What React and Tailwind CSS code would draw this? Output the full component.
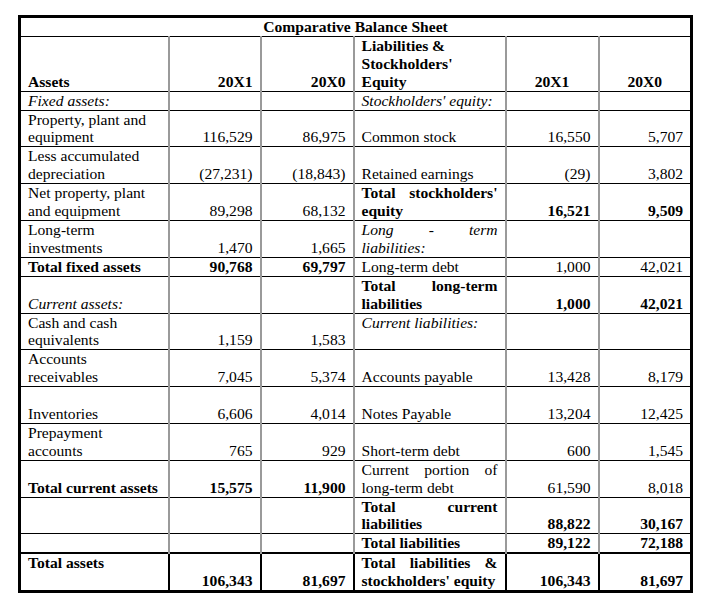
import React from 'react';

// one table cell; `last` switches the vertical rules to black for the totals row
const Td = ({ children, className = '', last = false, ...rest }) => (
  <td
    {...rest}
    className={`border-solid border-x-2 border-b border-b-black px-[7px] py-0 align-bottom ${
      last ? 'border-t-2 border-t-black border-x-black' : 'border-t border-t-black border-x-[#9a9a9a]'
    } ${className}`}
  >
    {children}
  </td>
);

const rows = [
  {
    left: <i>Fixed assets:</i>,
    right: <i>Stockholders&apos; equity:</i>,
  },
  {
    left: <>Property, plant and<br />equipment</>,
    a: '116,529', b: '86,975',
    right: 'Common stock', c: '16,550', d: '5,707',
  },
  {
    left: <>Less accumulated<br />depreciation</>,
    a: '(27,231)', b: '(18,843)',
    right: 'Retained earnings', c: '(29)', d: '3,802',
  },
  {
    left: <>Net property, plant<br />and equipment</>,
    a: '89,298', b: '68,132',
    right: <b>Total stockholders&apos; equity</b>, c: '16,521', d: '9,509', boldR: true,
  },
  {
    left: <>Long-term<br />investments</>,
    a: '1,470', b: '1,665',
    right: <i>Long - term liabilities:</i>,
  },
  {
    left: <b>Total fixed assets</b>,
    a: '90,768', b: '69,797', boldL: true,
    right: 'Long-term debt', c: '1,000', d: '42,021',
  },
  {
    left: <i>Current assets:</i>,
    right: <b>Total long-term liabilities</b>, c: '1,000', d: '42,021', boldR: true,
  },
  {
    left: <>Cash and cash<br />equivalents</>,
    a: '1,159', b: '1,583',
    right: <><i>Current liabilities:</i><br />&nbsp;</>,
  },
  {
    left: <>Accounts<br />receivables</>,
    a: '7,045', b: '5,374',
    right: 'Accounts payable', c: '13,428', d: '8,179',
  },
  {
    left: <>&nbsp;<br />Inventories</>,
    a: '6,606', b: '4,014',
    right: 'Notes Payable', c: '13,204', d: '12,425',
  },
  {
    left: <>Prepayment<br />accounts</>,
    a: '765', b: '929',
    right: 'Short-term debt', c: '600', d: '1,545',
  },
  {
    left: <b>Total current assets</b>,
    a: '15,575', b: '11,900', boldL: true,
    right: 'Current portion of long-term debt', c: '61,590', d: '8,018',
  },
  {
    left: <>&nbsp;<br />&nbsp;</>,
    right: <b>Total current liabilities</b>, c: '88,822', d: '30,167', boldR: true,
  },
  {
    left: '\u00a0',
    right: <b>Total liabilities</b>, c: '89,122', d: '72,188', boldR: true,
  },
  {
    left: <b>Total assets<br />&nbsp;</b>,
    a: '106,343', b: '81,697', boldL: true,
    right: (
      <b>
        Total liabilities &amp; <span className="whitespace-nowrap">stockholders&apos; equity</span>
      </b>
    ),
    c: '106,343', d: '81,697', boldR: true,
    last: true,
  },
];

export default function App() {
  return (
    <div className="min-h-screen bg-white pt-[15px] pl-[18px] font-['Liberation_Serif','Times_New_Roman',serif] text-[15.6px] leading-[17.9px] text-black">
      <table className="w-[672px] table-fixed border-collapse border-[3px] border-solid border-black">
        <colgroup>
          <col className="w-[149px]" />
          <col className="w-[92px]" />
          <col className="w-[93px]" />
          <col className="w-[152px]" />
          <col className="w-[93px]" />
          <col className="w-[93px]" />
        </colgroup>
        <tbody>
          <tr>
            <Td className="text-center font-bold" colSpan={6}>
              Comparative Balance Sheet
            </Td>
          </tr>
          <tr>
            <Td className="font-bold">Assets</Td>
            <Td className="text-right font-bold">20X1</Td>
            <Td className="text-right font-bold">20X0</Td>
            <Td className="font-bold">
              Liabilities &amp;<br />Stockholders&apos;<br />Equity
            </Td>
            <Td className="text-center font-bold">20X1</Td>
            <Td className="text-center font-bold">20X0</Td>
          </tr>
          {rows.map((r, i) => (
            <tr key={i}>
              <Td last={r.last}>{r.left}</Td>
              <Td last={r.last} className={`text-right ${r.boldL ? 'font-bold' : ''}`}>{r.a}</Td>
              <Td last={r.last} className={`text-right ${r.boldL ? 'font-bold' : ''}`}>{r.b}</Td>
              <Td last={r.last} className="text-justify">{r.right}</Td>
              <Td last={r.last} className={`text-right ${r.boldR ? 'font-bold' : ''}`}>{r.c}</Td>
              <Td last={r.last} className={`text-right ${r.boldR ? 'font-bold' : ''}`}>{r.d}</Td>
            </tr>
          ))}
        </tbody>
      </table>
    </div>
  );
}
